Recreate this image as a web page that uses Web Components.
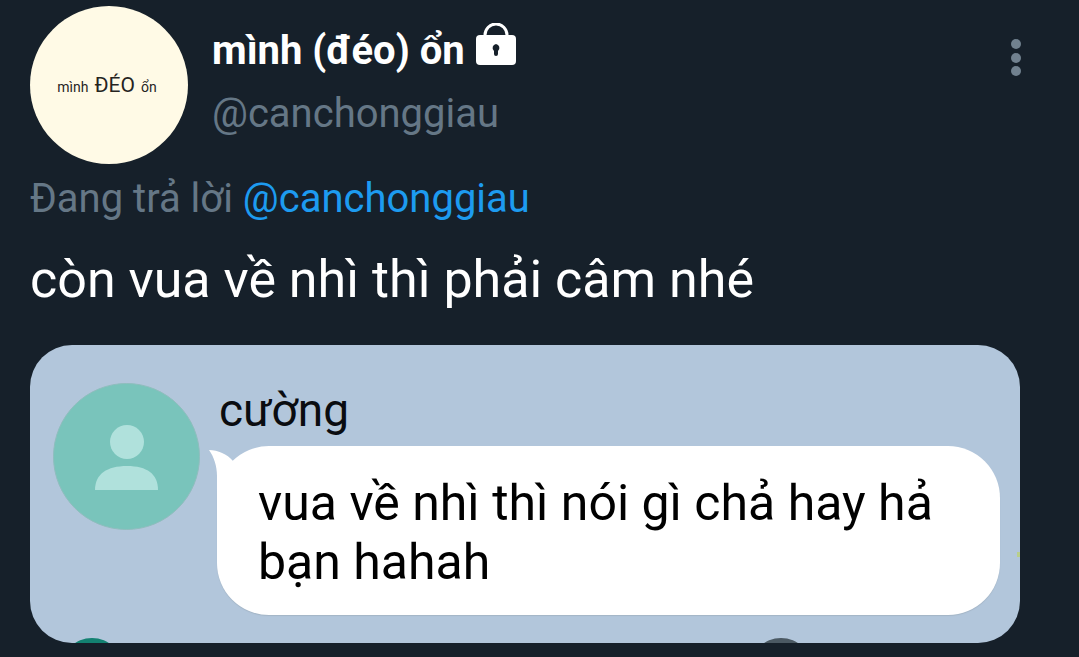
<!DOCTYPE html>
<html lang="vi">
<head>
<meta charset="utf-8">
<meta name="viewport" content="width=device-width, initial-scale=1">
<title>mình (đéo) ổn</title>
<style>
  body { margin: 0; background: #16202a; color: #fff; font-family: Roboto, "Noto Sans", sans-serif; }
</style>
</head>
<body>
<tweet-post>
  <tweet-author slot="author" handle="@canchonggiau">mình (đéo) ổn</tweet-author>
  <reply-context slot="context" to="@canchonggiau">Đang trả lời</reply-context>
  <span slot="text">còn vua về nhì thì phải câm nhé</span>
  <chat-card slot="media" name="cường">
    <chat-bubble>vua về nhì thì nói gì chả hay hả bạn hahah</chat-bubble>
  </chat-card>
</tweet-post>

<script>
function define(name, html) {
  const template = document.createElement('template');
  template.innerHTML = html;
  customElements.define(name, class extends HTMLElement {
    constructor() {
      super();
      this.attachShadow({ mode: 'open' }).append(template.content.cloneNode(true));
    }
    connectedCallback() {
      for (const el of this.shadowRoot.querySelectorAll('[data-attr]')) {
        el.textContent = this.getAttribute(el.dataset.attr);
      }
    }
  });
}

define('tweet-post', `
  <style>
    :host { display: block; }
    article { padding: 6px 59px 14px 30px; }
    .text { margin: 27px 0 35px; font-size: 52px; line-height: 60px; font-weight: 400; }
  </style>
  <article>
    <slot name="author"></slot>
    <slot name="context"></slot>
    <p class="text"><slot name="text"></slot></p>
    <slot name="media"></slot>
  </article>`);

define('user-avatar', `
  <style>
    :host { display: flex; align-items: center; justify-content: center; flex: none; box-sizing: border-box;
            width: 158px; height: 158px; padding: 2px 4px 0 0; border-radius: 50%; background: #fffae6; color: #26241f; }
    .words { display: flex; align-items: baseline; gap: 6px; line-height: 24px; }
    .small { font-size: 14px; }
    .big { font-size: 21px; }
  </style>
  <div class="words"><span class="small">mình</span><span class="big">ĐÉO</span><span class="small">ổn</span></div>`);

define('tweet-author', `
  <style>
    :host { display: flex; align-items: flex-start; gap: 24px; }
    .names { flex: 1; min-width: 0; padding-top: 13px; font-size: 40px; line-height: 63px; }
    .name { display: flex; align-items: center; gap: 10px; font-weight: 700; }
    .name svg { flex: none; margin-bottom: 14px; }
    .handle { display: block; color: #657786; text-decoration: none; }
    button { flex: none; margin: 32px -12px 0 0; padding: 0; border: 0; background: none; color: #71818f; }
    button svg { display: block; }
  </style>
  <user-avatar></user-avatar>
  <div class="names">
    <div class="name"><slot></slot>
      <svg width="42" height="42" viewBox="0 0 42 42" role="img" aria-label="Tài khoản được bảo vệ">
        <path d="M10 14 V12 A11 11 0 0 1 32 12 V14" fill="none" stroke="#fff" stroke-width="3"/>
        <rect x="1" y="12" width="40" height="30" rx="4" fill="#fff"/>
        <path d="M21 21 a4 4 0 0 1 2 7 V31 a2 2 0 0 1-4 0 V28 a4 4 0 0 1 2-7Z" fill="#16202a"/>
      </svg>
    </div>
    <a class="handle" href="#profile" data-attr="handle"></a>
  </div>
  <button type="button" aria-label="Thêm">
    <svg width="32" height="40" viewBox="0 0 32 40" fill="currentColor">
      <circle cx="16" cy="6" r="5"/><circle cx="16" cy="20" r="5"/><circle cx="16" cy="33" r="5"/>
    </svg>
  </button>`);

define('reply-context', `
  <style>
    :host { display: block; margin-top: 11px; font-size: 40px; line-height: 48px; color: #657786; }
    a { color: #1d9bf0; text-decoration: none; }
  </style>
  <slot></slot> <a href="#profile" data-attr="to"></a>`);

define('chat-card', `
  <style>
    :host { display: flex; gap: 17px; position: relative; overflow: hidden; padding: 38px 20px 28px 23px;
            border-radius: 42px; background: #b2c6db; color: #0a0c10; }
    .person { flex: none; width: 147px; height: 147px; }
    .column { flex: 1; min-width: 0; }
    .name { padding: 3px 0 12px 2px; font-size: 46px; line-height: 48px; }
    .next { position: absolute; top: calc(100% - 5px); width: 62px; height: 62px; border-radius: 50%; }
    .teal { left: 31px; background: #138171; }
    .grey { left: 720px; background: #4b5963; }
    .spark { position: absolute; right: 0; bottom: 86px; width: 3px; height: 5px; background: #b9cf8c; }
  </style>
  <svg class="person" viewBox="0 0 147 147" aria-hidden="true">
    <circle cx="73.500" cy="73.500" r="73" fill="#79c4bb" stroke="#8fbdbd"/>
    <circle cx="74" cy="59" r="17" fill="#b0e1dc"/>
    <path d="M42 107 C42 91 54 83 74 83 S105 91 105 107Z" fill="#b0e1dc"/>
  </svg>
  <div class="column">
    <div class="name" data-attr="name"></div>
    <slot></slot>
  </div>
  <span class="next teal"></span>
  <span class="next grey"></span>
  <span class="spark"></span>`);

define('chat-bubble', `
  <style>
    :host { display: block; position: relative; padding: 28px 41px 23px; border-radius: 52px;
            background: #fff; color: #000; font-size: 50px; line-height: 59px; box-shadow: 0 1px 1px #a3b5c6; }
    svg { position: absolute; left: -9px; top: 0; }
  </style>
  <svg width="52" height="54" viewBox="-9 0 52 54" aria-hidden="true">
    <path d="M-8 4 C1 4 10 8 16 15 L40 40 L0 52 V30 C0 20-3 11-8 4Z" fill="#fff"/>
  </svg>
  <slot></slot>`);
</script>
</body>
</html>
